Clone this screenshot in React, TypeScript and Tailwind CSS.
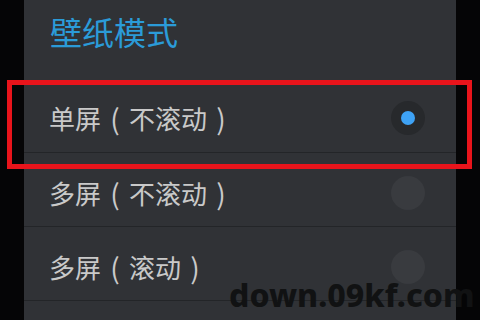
import React from "react";

const rows = [
  { pre: "单屏", mid: "不滚动", checked: true },
  { pre: "多屏", mid: "不滚动", checked: false },
  { pre: "多屏", mid: "滚动", checked: false },
];

function Paren({ c }: { c: string }) {
  return <span className="inline-block w-[28px] text-center text-[28px]">{c}</span>;
}

export default function App() {
  const cjk = { fontFamily: '"Noto Sans CJK SC", "Noto Sans", sans-serif' };
  return (
    <div className="relative w-[480px] h-[320px] overflow-hidden bg-[#050506] flex">
      <div className="w-[24px] shrink-0 bg-[#050506]" />
      <div className="w-[432px] shrink-0 bg-[#303236] flex flex-col" style={cjk}>
        <div className="h-[80px] shrink-0 flex items-center pl-[26px] pb-[18px]">
          <span className="text-[32px] leading-none text-[#2b9bd8]">壁纸模式</span>
        </div>
        <div className="h-[73px] shrink-0 border-b border-[#232528]" />
        {rows.slice(1).map((r, i) => (
          <div key={i} className="h-[74px] shrink-0 border-b border-[#232528]" />
        ))}
        <div className="flex-1" />
      </div>
      <div className="flex-1 bg-[#050506]" />

      {/* row contents overlay aligned to panel rows */}
      <div className="absolute left-[24px] top-[80px] w-[432px] flex flex-col" style={cjk}>
        {rows.map((r, i) => (
          <div
            key={i}
            className={`flex items-center justify-between pl-[25px] pr-[31px] ${i === 0 ? "h-[76px]" : "h-[74px]"}`}
          >
            <span className="flex items-center text-[26px] leading-none text-[#c9c9c9] whitespace-nowrap">
              {r.pre}
              <Paren c="(" />
              {r.mid}
              <Paren c=")" />
            </span>
            {r.checked ? (
              <div className="w-[34px] h-[34px] rounded-full bg-[#27292c] flex items-center justify-center">
                <div className="w-[14px] h-[14px] rounded-full bg-[#3ea2f5]" />
              </div>
            ) : (
              <div className="w-[34px] h-[34px] rounded-full bg-[#393b3f]" />
            )}
          </div>
        ))}
      </div>

      {/* red highlight box */}
      <div className="absolute left-[7px] top-[80px] w-[465px] h-[89px] border-[5px] border-[#e8141b]" />

      {/* watermark */}
      <div
        className="absolute left-[229px] top-[279px] text-[32px] font-extrabold leading-none text-[#111213]"
        style={{ fontFamily: '"Noto Sans", "DejaVu Sans", sans-serif' }}
      >
        down.09kf.com
      </div>
    </div>
  );
}
